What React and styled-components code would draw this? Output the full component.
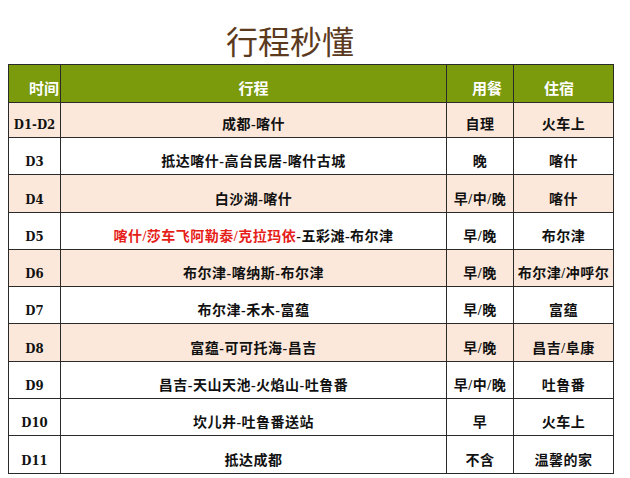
import React from 'react';
import styled, { createGlobalStyle } from 'styled-components';

const GlobalStyle = createGlobalStyle`
  html, body {
    margin: 0;
    padding: 0;
    background: #ffffff;
  }
  body {
    font-family: "Liberation Serif", "Noto Sans CJK SC", serif;
  }
`;

const Page = styled.div`
  width: 630px;
  height: 478px;
  padding: 0 0 0 8px;
  box-sizing: border-box;
  overflow: hidden;
`;

const Title = styled.h1`
  width: 605px;
  margin: 0;
  padding: 20px 41px 0 0;
  box-sizing: border-box;
  height: 64px;
  text-align: center;
  font-family: "Noto Sans CJK SC", sans-serif;
  font-weight: 400;
  font-size: 32px;
  line-height: 40px;
  color: #5b3a1e;
`;

const Table = styled.table`
  width: 605px;
  border-collapse: collapse;
  table-layout: fixed;
  border: 1.5px solid #2a2a2a;
`;

const HeadCell = styled.th`
  height: 38px;
  box-sizing: border-box;
  padding: 0 ${({ $pr }) => $pr || 0}px 5px ${({ $pl }) => $pl || 0}px;
  vertical-align: bottom;
  text-align: ${({ $align }) => $align || 'center'};
  background: #7b9a0c;
  color: #ffffff;
  font-family: "Noto Sans CJK SC", sans-serif;
  font-weight: 700;
  font-size: 15px;
  line-height: 18px;
  border: 1px solid #2a2a2a;
`;

const Row = styled.tr`
  height: ${({ $h }) => $h}px;
  background: ${({ $shaded }) => ($shaded ? '#fce8da' : '#ffffff')};
`;

const Cell = styled.td`
  box-sizing: border-box;
  padding: 0 0 3px;
  vertical-align: bottom;
  text-align: center;
  color: #111111;
  font-family: "Liberation Serif", "Noto Sans CJK SC", serif;
  font-weight: 700;
  font-size: 14px;
  line-height: 18px;
  letter-spacing: 0.5px;
  white-space: nowrap;
  border: 1px solid #2a2a2a;
`;

const DayCell = styled(Cell)`
  font-family: "DejaVu Serif", "Liberation Serif", serif;
  font-stretch: condensed;
  font-size: 13px;
  letter-spacing: 0;
`;

const Highlight = styled.span`
  color: #e61e1a;
`;

const rows = [
  { day: 'D1-D2', route: '成都-喀什', meal: '自理', stay: '火车上' },
  { day: 'D3', route: '抵达喀什-高台民居-喀什古城', meal: '晚', stay: '喀什' },
  { day: 'D4', route: '白沙湖-喀什', meal: '早/中/晚', stay: '喀什' },
  { day: 'D5', red: '喀什/莎车飞阿勒泰/克拉玛依', route: '-五彩滩-布尔津', meal: '早/晚', stay: '布尔津' },
  { day: 'D6', route: '布尔津-喀纳斯-布尔津', meal: '早/晚', stay: '布尔津/冲呼尔' },
  { day: 'D7', route: '布尔津-禾木-富蕴', meal: '早/晚', stay: '富蕴' },
  { day: 'D8', route: '富蕴-可可托海-昌吉', meal: '早/晚', stay: '昌吉/阜康' },
  { day: 'D9', route: '昌吉-天山天池-火焰山-吐鲁番', meal: '早/中/晚', stay: '吐鲁番' },
  { day: 'D10', route: '坎儿井-吐鲁番送站', meal: '早', stay: '火车上' },
  { day: 'D11', route: '抵达成都', meal: '不含', stay: '温馨的家' },
];

const shadedDays = ['D1-D2', 'D4', 'D6', 'D8'];

export default function App() {
  return (
    <Page>
      <GlobalStyle />
      <Title>行程秒懂</Title>
      <Table>
        <colgroup>
          <col style={{ width: 52 }} />
          <col style={{ width: 386 }} />
          <col style={{ width: 67 }} />
          <col style={{ width: 100 }} />
        </colgroup>
        <thead>
          <tr>
            <HeadCell $align="right" $pr={1}>时间</HeadCell>
            <HeadCell>行程</HeadCell>
            <HeadCell $align="right" $pr={11}>用餐</HeadCell>
            <HeadCell $align="left" $pl={30}>住宿</HeadCell>
          </tr>
        </thead>
        <tbody>
          {rows.map((r, i) => (
            <Row key={r.day} $h={i === 0 ? 35 : 37.3} $shaded={shadedDays.includes(r.day)}>
              <DayCell>{r.day}</DayCell>
              <Cell>
                {r.red && <Highlight>{r.red}</Highlight>}
                {r.route}
              </Cell>
              <Cell>{r.meal}</Cell>
              <Cell>{r.stay}</Cell>
            </Row>
          ))}
        </tbody>
      </Table>
    </Page>
  );
}
